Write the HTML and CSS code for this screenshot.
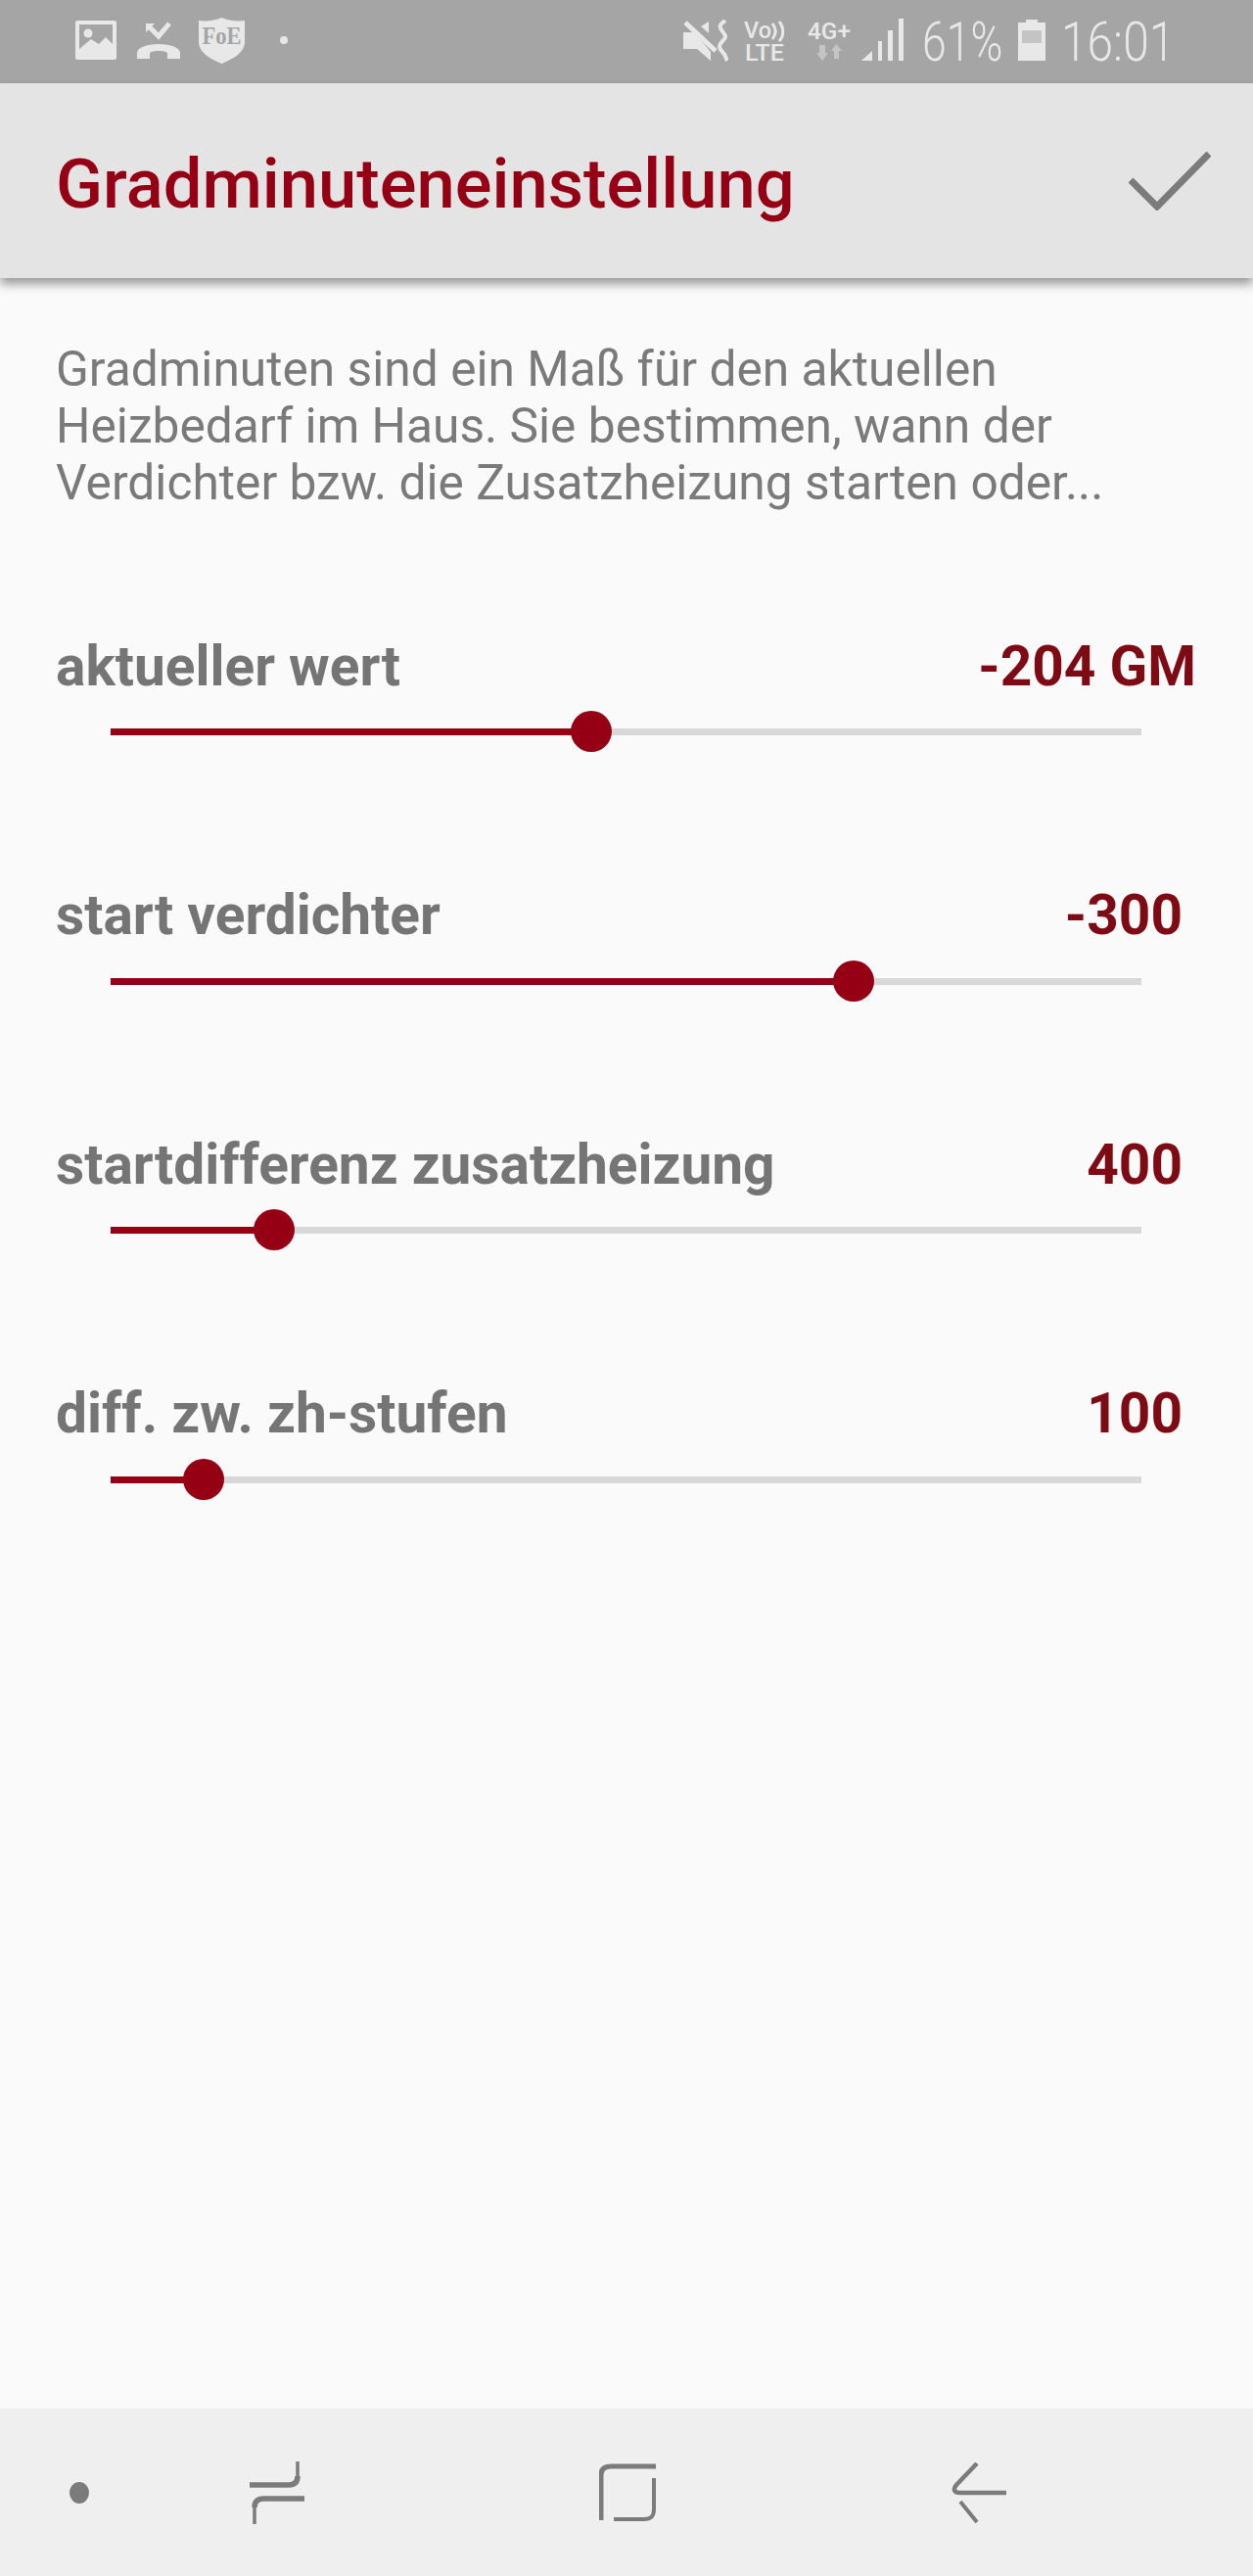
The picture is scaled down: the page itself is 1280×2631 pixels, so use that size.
FILE: index.html
```html
<!DOCTYPE html>
<html lang="de">
<head>
    <meta charset="UTF-8">
    <meta name="viewport" content="width=device-width, initial-scale=1.0">
    <title>Gradminuteneinstellung</title>
    <link rel="stylesheet" href="styles.css">
</head>
<body>
    <div class="status-bar">
        <div class="status-left">
            <svg class="ic-image" width="42" height="40" viewBox="0 0 42 40">
                <path fill="#e8e8e8" fill-rule="evenodd" d="M2 0h38a2 2 0 0 1 2 2v36a2 2 0 0 1-2 2H2a2 2 0 0 1-2-2V2a2 2 0 0 1 2-2zM4 4v25l12-10 8 5 7-7 7 7V4z"/>
                <circle cx="13" cy="13" r="4.500" fill="#e8e8e8"/>
            </svg>
            <svg class="ic-call" width="44" height="38" viewBox="0 0 44 38">
                <path fill="none" stroke="#e8e8e8" stroke-width="5" d="M12 5l10 10L33 2"/>
                <path fill="#e8e8e8" d="M9 2h9l-9 9z"/>
                <path fill="#e8e8e8" d="M0 38v-6c0-5 9-9 22-9s22 4 22 9v6H31v-5c0-2-3-3-9-3s-9 1-9 3v5z"/>
            </svg>
            <svg class="ic-shield" width="47" height="47" viewBox="0 0 47 47">
                <path fill="#e8e8e8" d="M0 3c8 1 17 0 23.500-3C30 3 39 4 47 3v22c0 10-11 17-23.500 22C11 42 0 35 0 25z"/>
                <text x="23.500" y="27" text-anchor="middle" class="shield-text" textLength="40" lengthAdjust="spacingAndGlyphs">FoE</text>
            </svg>
            <span class="status-dot"></span>
        </div>
        <div class="status-right">
            <svg class="ic-mute" width="46" height="43" viewBox="0 0 46 43">
                <path fill="#e8e8e8" d="M0 13h10l8 8 10 12v9L14 30H0zM26 2v12l-8-7z"/>
                <path fill="none" stroke="#e8e8e8" stroke-width="5" d="M2 3l31 29"/>
                <path fill="none" stroke="#e8e8e8" stroke-width="4" d="M43 1c-6 4-7 6-3 11s4 6 0 10-4 7 0 11 3 6 5 9"/>
            </svg>
            <svg class="ic-volte" width="44" height="54" viewBox="0 -6 44 54">
                <text x="0" y="18" class="small-text" textLength="28" lengthAdjust="spacingAndGlyphs">Vo</text>
                <path fill="none" stroke="#e8e8e8" stroke-width="3" d="M29 3c4 5 4 11 0 16M36 1c5 6 5 15 0 20"/>
                <text x="1" y="41" class="small-text" textLength="40" lengthAdjust="spacingAndGlyphs">LTE</text>
            </svg>
            <svg class="ic-net" width="44" height="54" viewBox="0 -6 44 54">
                <text x="0" y="19" class="small-text" textLength="44" lengthAdjust="spacingAndGlyphs">4G+</text>
                <path fill="#c4c4c4" d="M12 25h6v8h3l-6 8-6-8h3zM27 39v-8h-3l5.500-7 5.500 7h-3v8z"/>
            </svg>
            <svg class="ic-signal" width="44" height="43" viewBox="0 0 44 43">
                <path fill="#e8e8e8" d="M0 43l11-10v10zM17 23h4v20h-4zM27 12h5v31h-5zM38 0h5v43h-5z"/>
            </svg>
            <span class="clock-text battery-pct">61%</span>
            <svg class="ic-battery" width="30" height="42" viewBox="0 0 30 42">
                <path fill="#e8e8e8" d="M9 0h12v3h8v39H1V3h8z"/>
                <path fill="#c4c4c4" d="M5 11h20v13H5z"/>
            </svg>
            <span class="clock-text clock">16:01</span>
        </div>
    </div>

    <div class="app-bar">
        <h1>Gradminuteneinstellung</h1>
        <svg class="ic-check" width="84" height="60" viewBox="0 0 84 60">
            <path fill="none" stroke="#7b7b7b" stroke-width="7" d="M2 29l27 27L82 2"/>
        </svg>
    </div>

    <div class="content">
        <p class="intro">Gradminuten sind ein Maß für den aktuellen<br>Heizbedarf im Haus. Sie bestimmen, wann der<br>Verdichter bzw. die Zusatzheizung starten oder...</p>

        <div class="setting">
            <div class="setting-head">
                <span class="setting-label">aktueller wert</span>
                <span class="setting-value wide">-204 GM</span>
            </div>
            <div class="slider">
                <div class="slider-fill" style="width: 46.6%"><div class="slider-thumb"></div></div>
            </div>
        </div>

        <div class="setting">
            <div class="setting-head">
                <span class="setting-label">start verdichter</span>
                <span class="setting-value">-300</span>
            </div>
            <div class="slider">
                <div class="slider-fill" style="width: 72.1%"><div class="slider-thumb"></div></div>
            </div>
        </div>

        <div class="setting">
            <div class="setting-head">
                <span class="setting-label">startdifferenz zusatzheizung</span>
                <span class="setting-value">400</span>
            </div>
            <div class="slider">
                <div class="slider-fill" style="width: 15.9%"><div class="slider-thumb"></div></div>
            </div>
        </div>

        <div class="setting">
            <div class="setting-head">
                <span class="setting-label">diff. zw. zh-stufen</span>
                <span class="setting-value">100</span>
            </div>
            <div class="slider">
                <div class="slider-fill" style="width: 9%"><div class="slider-thumb"></div></div>
            </div>
        </div>
    </div>

    <div class="nav-bar">
        <span class="nav-dot"></span>
        <svg class="nav-recent" width="56" height="64" viewBox="0 0 56 64">
            <path fill="none" stroke="#7b7b7b" stroke-width="5.500" d="M0 24h40c6 0 9-3 9-9"/>
            <path fill="none" stroke="#7b7b7b" stroke-width="3.500" d="M49 16V0"/>
            <path fill="none" stroke="#7b7b7b" stroke-width="5.500" d="M56 38H14c-6 0-9 3-9 9"/>
            <path fill="none" stroke="#7b7b7b" stroke-width="3.500" d="M5 46v18"/>
        </svg>
        <svg class="nav-home" width="58" height="60" viewBox="0 0 58 60">
            <path fill="none" stroke="#7b7b7b" stroke-width="5" d="M58 3H12C5 3 2 6 2 12v46"/>
            <path fill="none" stroke="#7b7b7b" stroke-width="4" d="M56 15v32c0 7-3 10-10 10H15"/>
        </svg>
        <svg class="nav-back" width="57" height="62" viewBox="0 0 57 62">
            <path fill="none" stroke="#7b7b7b" stroke-width="4.500" d="M27 1L6 23c-4 5-2 8 4 8h47"/>
            <path fill="none" stroke="#7b7b7b" stroke-width="4" d="M10 40l17 21"/>
        </svg>
    </div>
</body>
</html>
```

FILE: styles.css
```css
* {
    box-sizing: border-box;
}
html, body {
    height: 100%;
}
body {
    margin: 0;
    height: 2631px;
    display: flex;
    flex-direction: column;
    background-color: #fafafa;
    font-family: 'Roboto', sans-serif;
    overflow: hidden;
}
svg {
    display: block;
    flex: none;
}

/* status bar */
.status-bar {
    height: 85px;
    flex: none;
    background-color: #a5a5a5;
    display: flex;
    justify-content: space-between;
    padding: 0 87px 0 77px;
}
.status-left {
    display: flex;
    align-items: flex-start;
}
.ic-image { margin-top: 21px; }
.ic-call { margin: 22px 0 0 21px; }
.ic-shield { margin: 18px 0 0 19px; }
.status-dot {
    width: 8px;
    height: 8px;
    margin: 37px 0 0 36px;
    border-radius: 50%;
    background-color: #e8e8e8;
}
.status-right {
    display: flex;
    align-items: flex-start;
}
.ic-mute { margin: 20px 0 0 0; }
.ic-volte { margin: 15px 0 0 16px; }
.ic-net { margin: 15px 0 0 21px; }
.ic-signal { margin: 19px 0 0 11px; }
.ic-battery { margin: 20px 0 0 15px; }
.shield-text {
    font-family: 'Liberation Serif', serif;
    font-size: 25px;
    font-weight: bold;
    fill: #a5a5a5;
}
.small-text {
    font-family: 'Roboto', sans-serif;
    font-size: 24px;
    font-weight: 500;
    fill: #e8e8e8;
}
.clock-text {
    display: block;
    font-size: 55px;
    font-weight: 300;
    line-height: 86px;
    color: #e8e8e8;
    transform-origin: left center;
    white-space: nowrap;
}
.battery-pct {
    width: 82px;
    margin-left: 18px;
    transform: scaleX(0.81);
}
.clock {
    width: 109px;
    margin-left: 15px;
    transform: scaleX(0.87);
}

/* app bar */
.app-bar {
    height: 199px;
    flex: none;
    background-color: #e4e4e4;
    display: flex;
    align-items: center;
    justify-content: space-between;
    padding: 0 43px 0 57px;
    box-shadow: 0 6px 10px rgba(0,0,0,0.4);
    position: relative;
}
.app-bar h1 {
    margin: 0;
    padding-top: 6px;
    font-size: 70.5px;
    font-weight: 500;
    color: #950014;
}

/* settings list */
.content {
    flex: 1;
    padding: 64px 58px 0 57px;
}
.intro {
    margin: 0 0 123px;
    font-size: 49.7px;
    line-height: 58px;
    color: #7a7a7a;
}
.setting {
    margin-bottom: 148.6px;
}
.setting-head {
    display: flex;
    justify-content: space-between;
    align-items: center;
    height: 70px;
    margin-bottom: 29px;
}
.setting-label {
    font-size: 56.8px;
    font-weight: 700;
    color: #757575;
}
.setting-value {
    font-size: 56.8px;
    font-weight: 700;
    color: #7e0a14;
    padding-right: 14px;
}
.setting-value.wide {
    padding-right: 0;
}
.slider {
    height: 7px;
    margin: 0 56px 0 56px;
    background-color: #d8d8d8;
}
.slider-fill {
    position: relative;
    height: 100%;
    background-color: #950014;
}
.slider-thumb {
    position: absolute;
    top: -18px;
    right: -21px;
    width: 42px;
    height: 42px;
    border-radius: 50%;
    background-color: #950014;
}

/* nav bar */
.nav-bar {
    height: 171px;
    flex: none;
    background-color: #efefef;
    display: flex;
    align-items: center;
    padding: 0 0 0 71px;
}
.nav-dot {
    width: 20px;
    height: 22px;
    border-radius: 50%;
    background-color: #7b7b7b;
}
.nav-recent { margin-left: 164px; }
.nav-home { margin-left: 301px; }
.nav-back { margin-left: 301px; }
```
